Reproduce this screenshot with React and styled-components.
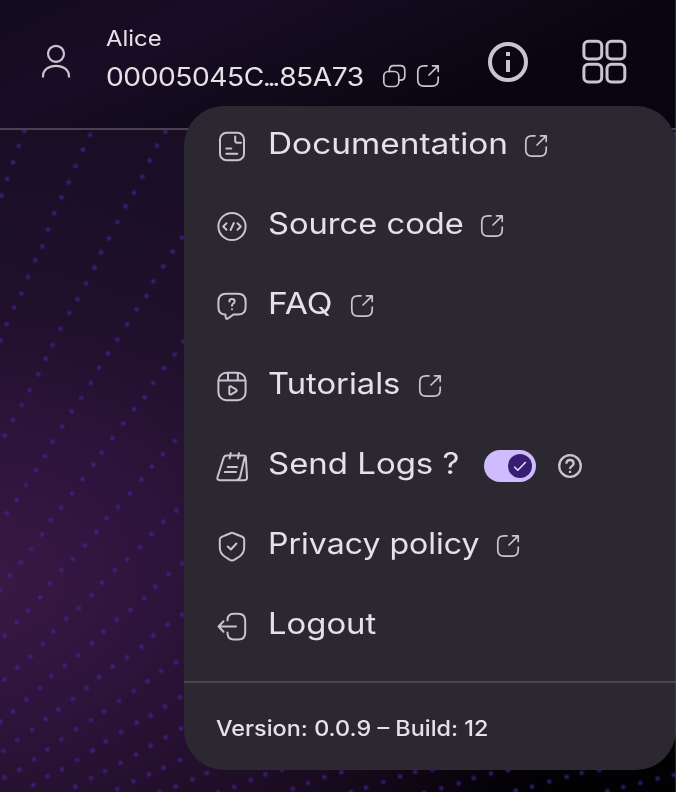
import React, { useLayoutEffect, useRef, useState } from "react";
import styled, { createGlobalStyle } from "styled-components";

const GlobalStyle = createGlobalStyle`
  *, *::before, *::after { box-sizing: border-box; }
  body { margin: 0; background: #08050f; overflow: hidden; }
`;

const Page = styled.div`
  position: relative;
  width: 676px;
  height: 792px;
  overflow: hidden;
  color: #e6e1e5;
  font-family: Inter, "Liberation Sans", sans-serif;
  background:
    radial-gradient(ellipse 560px 440px at -10px 580px, rgba(66, 27, 76, 0.8) 0%, rgba(54, 23, 70, 0.7) 30%, rgba(40, 18, 50, 0.45) 62%, rgba(30, 14, 40, 0) 100%),
    linear-gradient(125deg, #1a0e27 0%, #190e25 40%, #190b1f 62%, #020104 88%);
`;

const DotField = styled.svg`
  position: absolute;
  inset: 0;
  fill: #482694;
  opacity: 0.9;
`;

const Header = styled.header`
  position: relative;
  display: flex;
  align-items: flex-start;
  height: 130px;
  padding: 24px 0 0 40px;
  border-bottom: 2px solid #49434f;
  background: linear-gradient(155deg, #120b1e 0%, #180d25 26%, #110a1b 48%, #090611 70%, #080510 100%);
`;

const Account = styled.div`
  display: flex;
  flex-direction: column;
  width: 276px;
  margin-left: 34px;
`;

const IdActions = styled.div`
  display: flex;
  gap: 11px;
  width: 58px;
  margin-top: 40px;
`;

const HeaderActions = styled.div`
  display: flex;
  gap: 54px;
  margin: 15px 0 0 48px;
`;

const Icon = styled.svg`
  display: block;
  flex: none;
  overflow: visible;
  fill: none;
  stroke: #cac4d0;
  stroke-width: ${(p) => p.$stroke || 2};
  stroke-linecap: ${(p) => p.$cap || "round"};
  stroke-linejoin: round;
  margin-top: ${(p) => p.$top || 0}px;
`;

const TextSlot = styled.div`
  flex: none;
  width: ${(p) => p.$width}px;
  height: ${(p) => p.$line}px;
  margin-bottom: ${(p) => p.$below || 0}px;
  font-size: ${(p) => p.$size}px;
  font-weight: ${(p) => p.$weight || 400};
  line-height: ${(p) => p.$line}px;
  letter-spacing: ${(p) => p.$spacing || 0}px;
  white-space: nowrap;
`;

const TextRun = styled.span`
  display: inline-block;
  transform-origin: 0 50%;
`;

const TightDots = styled.span`
  margin-left: -1px;
  letter-spacing: -3px;
  padding-right: 2px;
`;

const Menu = styled.nav`
  position: absolute;
  top: 106px;
  left: 184px;
  width: 492px;
  height: 664px;
  border-radius: 40px;
  overflow: hidden;
  background: #2b2831;
`;

const MenuRow = styled.div`
  display: flex;
  align-items: center;
  height: 80px;
  padding-left: 32px;
`;

const MenuIcon = styled.span`
  width: 32px;
  height: 32px;
  margin-right: 20px;
`;

const Trailing = styled.span`
  display: flex;
  align-items: center;
  gap: 22px;
  margin-left: ${(p) => p.$gap}px;
`;

const Toggle = styled.span`
  display: flex;
  justify-content: flex-end;
  width: 52px;
  height: 32px;
  padding: 4px;
  border-radius: 16px;
  background: #cfbcff;
`;

const Knob = styled.span`
  display: grid;
  place-items: center;
  width: 24px;
  height: 24px;
  border-radius: 50%;
  background: #381e72;
`;

const MenuFooter = styled.footer`
  display: flex;
  align-items: center;
  height: 89px;
  margin-top: 15px;
  padding: 2px 0 0 32px;
  border-top: 2px solid #49454f;
`;

const WindowEdge = styled.div`
  position: absolute;
  top: 0;
  right: 0;
  width: 1px;
  height: 100%;
  background: rgba(95, 95, 105, 0.4);
`;

/* Widens its text horizontally so that it fills the given width. */
function WideText({ width, size, line, weight, spacing, below, children }) {
  const ref = useRef(null);
  const [scale, setScale] = useState(1);
  useLayoutEffect(() => {
    setScale(width / ref.current.offsetWidth);
  }, [width]);
  return (
    <TextSlot $width={width} $size={size} $line={line} $weight={weight} $spacing={spacing} $below={below}>
      <TextRun ref={ref} style={{ transform: `scaleX(${scale})` }}>{children}</TextRun>
    </TextSlot>
  );
}

const External = ({ top }) => (
  <Icon width="22" height="22" viewBox="0 0 22 22" $stroke={1.7} $top={top}>
    <path d="M10 .8H7Q.8.8.8 7v8q0 6.2 6.2 6.2h8q6.2 0 6.2-6.2v-3M12 10 21.2.8M15.5.8h5.7v5.7" />
  </Icon>
);

const icons = {
  doc: (
    <>
      <rect x="4" y="2.8" width="24" height="27.4" rx="6.5" />
      <path d="M19.2 6.5v4.2q0 2 2 2H25M10.3 18.5h5M10.3 23.7h11" />
    </>
  ),
  code: (
    <>
      <circle cx="16" cy="16.5" r="13.6" />
      <path d="m10.5 13.2-3.3 3.3 3.3 3.3M21.5 13.2l3.3 3.3-3.3 3.3M17.8 13l-3.2 7" />
    </>
  ),
  faq: (
    <>
      <path d="M10 3.8h12q7.6 0 7.6 7.6v5.5q0 7.6-7.6 7.6h-4.5l-5.5 3.9q-2 1.3-2.3-1.2l-.3-2.7q-7-.1-7-7.6v-5.5q0-7.6 7.6-7.6Z" />
      <path d="M13.4 11.5q0-2.4 2.6-2.4t2.6 2.3q0 1.4-1.4 2.1-1.2.7-1.2 2.3M16 19.2v.1" />
    </>
  ),
  video: (
    <>
      <rect x="2.4" y="2.8" width="27.2" height="27.4" rx="8" />
      <path d="M3 10.5h26M12 3v7.5M21.8 3v7.5M13.3 17.2v6q0 2 1.8 1.1l4.8-2.7q1.7-1.1 0-2.2l-4.8-2.9q-1.8-.9-1.8.7Z" />
    </>
  ),
  notes: (
    <>
      <path d="M11 5.5h16.5q2.4 0 2.4 2.4L31 27.2q.2 3-2.8 3H3.7q-3 0-2.2-3L7.6 7.9q.7-2.4 3.4-2.4ZM28.5 8l-4.3 18.5q-.8 3.4-3.7 3.7" />
      <path d="m14.7 2.9-1 5.6M23 2.9l-1 5.6M11.7 17H21M8.8 22H20" />
    </>
  ),
  shield: (
    <>
      <path d="M14.5 3.2q1.5-.7 3 0l8.8 3.6q1.9.8 1.9 3V17q0 6.3-4.6 9.5l-5.4 3.3q-2.2 1.2-4.4 0l-5.2-3.3Q3.8 23.5 3.8 17V9.8q0-2.2 1.9-3Z" />
      <path d="m11.8 16.5 3.1 3 5.5-6" />
    </>
  ),
  logout: (
    <path d="M11.5 10.5v-1Q12 3.7 17.5 3.7h4.8q6.9 0 6.9 7v11.7q0 7-6.9 7h-4.8q-5.5 0-6-5.8v-1M20 16.5H2.5M7.5 11.3l-5 5.2 5 5.2" />
  ),
};

const items = [
  { icon: "doc", label: "Documentation", width: 240, gap: 17 },
  { icon: "code", label: "Source code", width: 196, gap: 17 },
  { icon: "faq", label: "FAQ", width: 65, gap: 18 },
  { icon: "video", label: "Tutorials", width: 132, gap: 19 },
  { icon: "notes", label: "Send Logs ?", width: 191, gap: 25, toggle: true },
  { icon: "shield", label: "Privacy policy", width: 212, gap: 17 },
  { icon: "logout", label: "Logout", width: 108, plain: true },
];

/* Dot patches: each has its origin on the page and points in thirds of a pixel. */
const dotPatches = [
  {
    x: 0, y: 130,
    points: "73,3 56,48 39,97 21,147 4,197 270,15 249,59 227,108 206,157 185,202 163,250 144,299 127,349 106,391 84,441 64,491 42,533 20,583 1,632 496,5 471,47 449,92 427,140 402,188 377,229 352,276 327,325 303,367 284,413 258,460 233,508 208,549 182,597 158,645 137,686 115,733 89,781 65,825 39,870 14,917 546,323 518,365 490,409 460,454 439,499 410,538 381,583 352,629 324,671 297,713 273,759 244,804 215,844 187,889 158,935 134,978 551,635 524,674 493,715 460,759 434,802 402,838 370,881 337,925 305,968 524,933 489,973",
  },
  {
    x: 0, y: 460,
    points: "107,30 78,75 50,121 20,160 280,14 248,58 216,101 184,143 152,181 126,224 94,267 62,307 29,347 1,390 456,19 425,59 390,100 354,141 319,174 289,215 255,256 219,297 184,330 149,371 120,412 84,452 50,487 14,527 529,152 490,185 455,223 420,261 382,298 344,330 306,368 275,406 236,444 199,476 160,514 129,552 91,590 52,623 14,659 546,311 506,343 466,380 432,415 391,450 350,479 310,515 276,550 235,585 194,617 154,649 120,684 79,719 39,755 2,785 546,464 503,494 460,527 425,560 381,592 338,620 298,651 260,684 218,717 175,749 137,778 96,808 52,840 10,873 528,608 484,633 443,664 401,693 357,723 312,754 273,780 229,808 184,838 142,868 102,898 58,929 13,953 541,712 495,739 452,767 410,788 363,816 317,844 278,872 232,900 186,928 142,949 100,976 543,806 497,832 452,857 408,883 362,909 315,933 273,954 226,980 540,900 491,923 447,943 401,964 352,988 527,980 478,996",
  },
  {
    x: 180, y: 670,
    points: "80,309 37,328 212,330 163,351 256,313 306,300 338,357 384,339 433,321 484,307 558,353 610,336 660,319 706,306 512,366 732,368 757,299 784,355 836,340 881,324 933,311 984,301 1007,362 1056,350 1108,335 1160,321 1205,309 1258,300 1282,363 1330,351 1381,339 1433,326 1481,315 114,367",
  },
];

const Dots = () => (
  <DotField width="676" height="792" viewBox="0 0 676 792">
    <defs>
      <filter id="soften" x="-5%" y="-5%" width="110%" height="110%">
        <feGaussianBlur stdDeviation="0.8" />
      </filter>
    </defs>
    <g filter="url(#soften)">
      {dotPatches.map((patch) =>
        patch.points.split(" ").map((pair) => {
          const [x, y] = pair.split(",").map(Number);
          return <circle key={`${patch.y}-${pair}`} cx={patch.x + x / 3} cy={patch.y + y / 3} r="2.1" />;
        })
      )}
      <circle cx="675" cy="134" r="2.2" />
    </g>
  </DotField>
);

export default function App() {
  return (
    <Page>
      <GlobalStyle />
      <Dots />
      <Header>
        <Icon width="32" height="36" viewBox="0 0 32 36" $stroke={2.2} $top={19} $cap="butt">
          <circle cx="16" cy="10.8" r="8" />
          <path d="M3 34.5v-1C3 27 8.5 22.8 16 22.8S29 27 29 33.5v1" />
        </Icon>
        <Account>
          <WideText width={55.5} size={22} line={28}>Alice</WideText>
          <WideText width={258} size={25} line={50} spacing={-0.4}>
            00005045C<TightDots>...</TightDots>85A73
          </WideText>
        </Account>
        <IdActions>
          <Icon width="24" height="24" viewBox="0 0 24 24" $stroke={1.7}>
            <rect x="1.8" y="7.5" width="15" height="15" rx="4.5" />
            <path d="M7.4 7.5V6q0-4.4 4.4-4.4h6.4q4.6 0 4.6 4.6v5.6q0 4.4-4.4 4.4h-1.6" />
          </Icon>
          <External top={1} />
        </IdActions>
        <HeaderActions>
          <Icon width="40" height="40" viewBox="0 0 40 40" $stroke={4} $cap="butt" $top={3}>
            <circle cx="20" cy="20" r="18" />
            <path d="M20 10v4M20 18v12" />
          </Icon>
          <Icon width="45" height="45" viewBox="0 0 45 45" $stroke={3}>
            <rect x="1.9" y="2.2" width="17.8" height="17.8" rx="4.5" />
            <rect x="25" y="2.2" width="17.8" height="17.8" rx="4.5" />
            <rect x="1.9" y="25.2" width="17.8" height="17.8" rx="4.5" />
            <rect x="25" y="25.2" width="17.8" height="17.8" rx="4.5" />
          </Icon>
        </HeaderActions>
      </Header>
      <Menu>
        {items.map((item) => (
          <MenuRow key={item.label}>
            <MenuIcon>
              <Icon width="32" height="32" viewBox="0 0 32 32">{icons[item.icon]}</Icon>
            </MenuIcon>
            <WideText width={item.width} size={29.5} line={40} below={7}>{item.label}</WideText>
            {!item.plain && (
              <Trailing $gap={item.gap}>
                {item.toggle ? (
                  <>
                    <Toggle>
                      <Knob>
                        <svg width="14" height="12" viewBox="0 0 14 12" fill="none" stroke="#e9ddff" strokeWidth="1.6">
                          <path d="m1.2 6.7 3.6 3.5L12.8 2" />
                        </svg>
                      </Knob>
                    </Toggle>
                    <Icon width="24" height="24" viewBox="0 0 24 24" $cap="butt" $stroke={2.3}>
                      <circle cx="12" cy="12" r="10.8" />
                      <path d="M8.4 9.8C8.4 7.3 9.8 6 12 6s3.6 1.3 3.6 3.4c0 2.8-3.6 2.8-3.6 5.6M12 16.7v2.3" />
                    </Icon>
                  </>
                ) : (
                  <External />
                )}
              </Trailing>
            )}
          </MenuRow>
        ))}
        <MenuFooter>
          <WideText width={272} size={21.5} line={28} weight={500}>Version: 0.0.9 – Build: 12</WideText>
        </MenuFooter>
      </Menu>
      <WindowEdge />
    </Page>
  );
}
